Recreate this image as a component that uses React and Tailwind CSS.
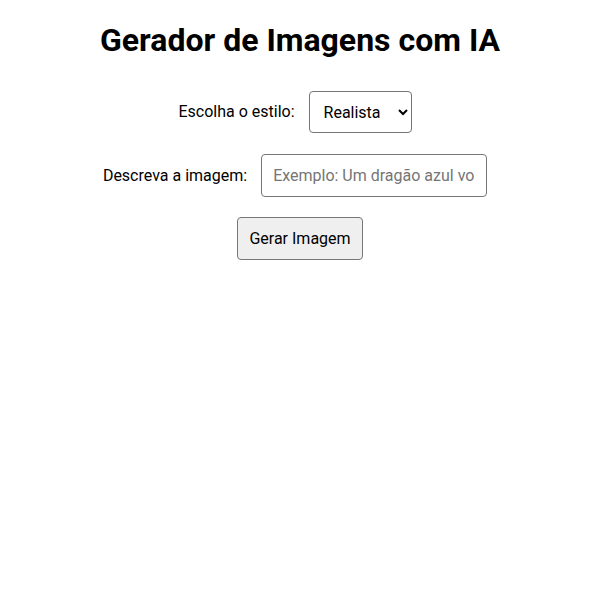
import React, { useState } from "react";

export default function App() {
  const [style, setStyle] = useState("realista");
  const [prompt, setPrompt] = useState("");

  return (
    <div className="min-h-[600px] bg-white text-black text-center font-['Roboto',sans-serif]">
      <h1 className="pt-[21px] mb-[22px] text-[32px] leading-[38px] font-bold">
        Gerador de Imagens com IA
      </h1>

      <div className="flex items-center justify-center text-base">
        <label htmlFor="estilo">Escolha o estilo:</label>
        <select
          id="estilo"
          value={style}
          onChange={(e) => setStyle(e.target.value)}
          className="ml-[14px] mr-[10px] my-[10px] h-[42px] w-[103px] px-[10px] border border-[#767676] rounded-[4px] bg-white"
        >
          <option value="realista">Realista</option>
          <option value="anime">Anime</option>
          <option value="cartoon">Cartoon</option>
        </select>
      </div>

      <div className="flex items-center justify-center text-base mt-[1px]">
        <label htmlFor="prompt">Descreva a imagem:</label>
        <input
          id="prompt"
          type="text"
          value={prompt}
          onChange={(e) => setPrompt(e.target.value)}
          placeholder="Exemplo: Um dragão azul voando sobre montanhas"
          className="ml-[14px] mr-[10px] my-[10px] h-[43px] w-[226px] px-[11px] border border-[#767676] rounded-[4px] placeholder:text-[#757575]"
        />
      </div>

      <div className="flex justify-center">
        <button className="my-[10px] h-[43px] px-[11px] bg-[#efefef] border border-[#767676] rounded-[4px] text-base">
          Gerar Imagem
        </button>
      </div>
    </div>
  );
}
